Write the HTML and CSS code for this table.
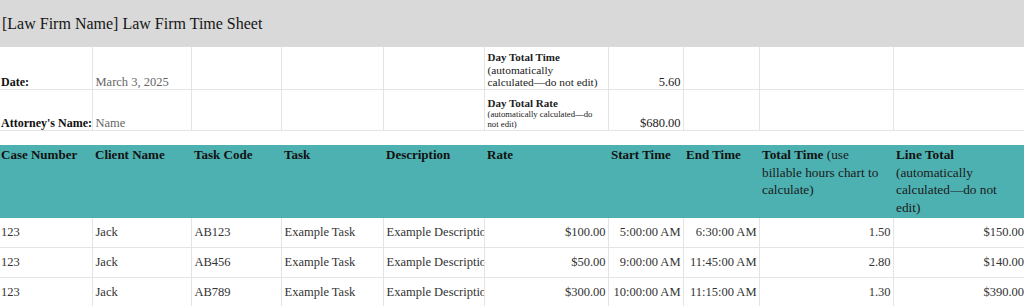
FILE: index.html
```html
<!DOCTYPE html>
<html lang="en">
<head>
<meta charset="utf-8">
<title>Law Firm Time Sheet</title>
<link rel="stylesheet" href="styles.css">
</head>
<body>
<div class="sheet">
  <div class="title-band">[Law Firm Name] Law Firm Time Sheet</div>

  <table class="grid info">
    <colgroup>
      <col class="c1"><col class="c2"><col class="c3"><col class="c4"><col class="c5">
      <col class="c6"><col class="c7"><col class="c8"><col class="c9"><col class="c10">
    </colgroup>
    <tr class="info-row r1">
      <td class="label">Date:</td>
      <td class="field">March 3, 2025</td>
      <td></td><td></td><td></td>
      <td class="note">
        <div class="note-title">Day Total Time</div>
        <div class="note-sub">(automatically</div>
        <div class="note-sub">calculated—do not edit)</div>
      </td>
      <td class="num">5.60</td>
      <td></td><td></td><td></td>
    </tr>
    <tr class="info-row r2">
      <td class="label">Attorney's Name:</td>
      <td class="field">Name</td>
      <td></td><td></td><td></td>
      <td class="note">
        <div class="note-title">Day Total Rate</div>
        <div class="note-small">(automatically calculated—do</div>
        <div class="note-small">not edit)</div>
      </td>
      <td class="num">$680.00</td>
      <td></td><td></td><td></td>
    </tr>
  </table>

  <table class="grid entries">
    <colgroup>
      <col class="c1"><col class="c2"><col class="c3"><col class="c4"><col class="c5">
      <col class="c6"><col class="c7"><col class="c8"><col class="c9"><col class="c10">
    </colgroup>
    <thead>
      <tr class="head-row">
        <th>Case Number</th>
        <th>Client Name</th>
        <th>Task Code</th>
        <th>Task</th>
        <th>Description</th>
        <th>Rate</th>
        <th>Start Time</th>
        <th>End Time</th>
        <th class="mixed"><b>Total Time</b> (use billable hours chart to calculate)</th>
        <th class="mixed"><b>Line Total</b> (automatically calculated—do not edit)</th>
      </tr>
    </thead>
    <tbody>
      <tr class="data-row">
        <td>123</td><td>Jack</td><td>AB123</td><td>Example Task</td><td>Example Description</td>
        <td class="num">$100.00</td><td class="num">5:00:00 AM</td><td class="num">6:30:00 AM</td>
        <td class="num">1.50</td><td class="num">$150.00</td>
      </tr>
      <tr class="data-row">
        <td>123</td><td>Jack</td><td>AB456</td><td>Example Task</td><td>Example Description</td>
        <td class="num">$50.00</td><td class="num">9:00:00 AM</td><td class="num">11:45:00 AM</td>
        <td class="num">2.80</td><td class="num">$140.00</td>
      </tr>
      <tr class="data-row">
        <td>123</td><td>Jack</td><td>AB789</td><td>Example Task</td><td>Example Description</td>
        <td class="num">$300.00</td><td class="num">10:00:00 AM</td><td class="num">11:15:00 AM</td>
        <td class="num">1.30</td><td class="num">$390.00</td>
      </tr>
    </tbody>
  </table>
</div>
</body>
</html>
```

FILE: styles.css
```css
html, body {
  margin: 0;
  padding: 0;
  background: #ffffff;
}

body {
  font-family: "Liberation Serif", "Times New Roman", serif;
  color: #222222;
  overflow: hidden;
}

.sheet {
  width: 1024px;
  overflow: hidden;
}

.title-band {
  height: 47px;
  background: #d9d9d9;
  font-size: 16px;
  line-height: 47px;
  padding-left: 2px;
  color: #151515;
  white-space: nowrap;
}

.grid {
  border-collapse: collapse;
  table-layout: fixed;
  width: 1026px;
}

.c1 { width: 92px; }
.c2 { width: 99px; }
.c3 { width: 90px; }
.c4 { width: 102px; }
.c5 { width: 101px; }
.c6 { width: 124px; }
.c7 { width: 75px; }
.c8 { width: 76px; }
.c9 { width: 134px; }
.c10 { width: 133px; }

.grid td {
  border: 1px solid #e4e4e4;
  padding: 0 2px 0 3px;
  overflow: hidden;
  white-space: nowrap;
}

.grid tr > td:first-child {
  border-left: none;
  padding-left: 1px;
}

.grid tr > td:last-child {
  border-right: none;
}

/* info rows */
.info tr:first-child td {
  border-top: none;
}

.info-row td {
  vertical-align: bottom;
  padding-bottom: 0;
  font-size: 12.5px;
  line-height: 13px;
}

.info-row td.note {
  padding-bottom: 1px;
}

.r1 td { height: 41px; }
.r2 td { height: 39px; }

.info-row .label {
  font-weight: bold;
  font-size: 12px;
  color: #111111;
}

.info-row .field {
  color: #666666;
}

.info-row .note {
  padding-left: 3px;
  padding-right: 2px;
  color: #222222;
}

.note-title {
  font-weight: bold;
  font-size: 11px;
  line-height: 13px;
}

.note-sub {
  font-size: 11.4px;
  line-height: 12px;
}

.note-small {
  font-size: 8.7px;
  line-height: 9.5px;
}

.grid .num {
  text-align: right;
  padding-right: 2px;
}

/* entries */
.entries {
  margin-top: 14px;
}

.head-row th {
  background: #4eb1b1;
  height: 72px;
  padding: 1px 3px 0 3px;
  vertical-align: top;
  text-align: left;
  font-size: 13px;
  line-height: 17.5px;
  font-weight: bold;
  color: #111111;
  border: none;
}

.head-row th:first-child {
  padding-left: 1px;
}

.head-row th.mixed {
  font-weight: normal;
  font-size: 13.3px;
  color: #1a1a1a;
}

.head-row th.mixed b {
  font-weight: bold;
  color: #111111;
}

.data-row td {
  height: 29px;
  vertical-align: middle;
  font-size: 12.5px;
  color: #333333;
  border-top: none;
}
```
